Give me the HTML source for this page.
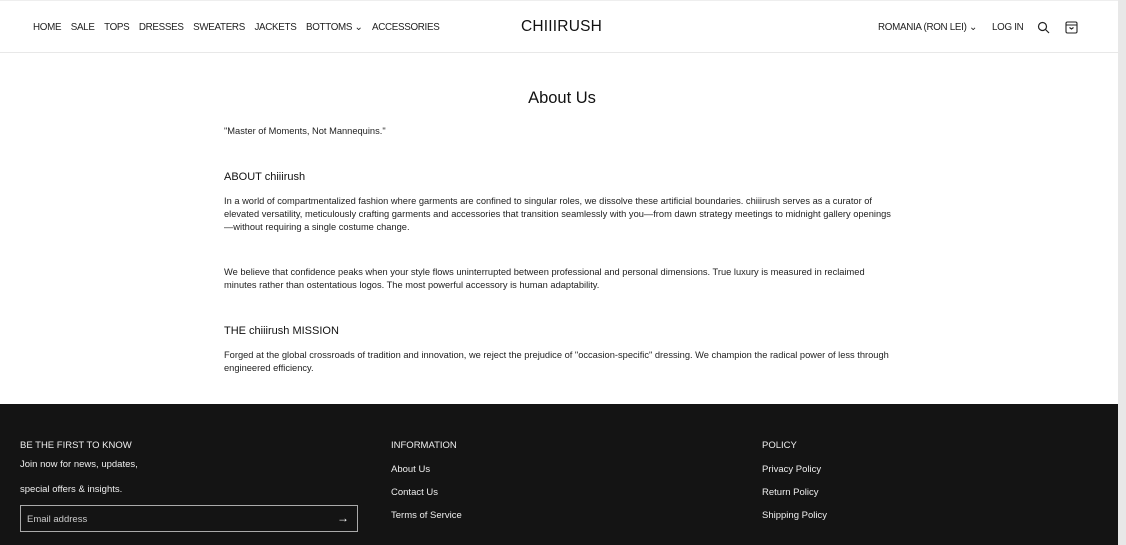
<!DOCTYPE html>
<html><head><meta charset="utf-8"><style>
*{margin:0;padding:0;box-sizing:border-box}
body{width:1126px;height:545px;overflow:hidden;background:#fff;font-family:"Liberation Sans",sans-serif;color:#111;position:relative}
.hdr{position:absolute;top:0;left:0;width:1118px;height:53px;border-top:1px solid #eee;border-bottom:1px solid #e8e8e8}
.nav{position:absolute;top:21px;font-size:9.8px;color:#222;white-space:nowrap;letter-spacing:-0.3px}
.nav span{margin-right:9.5px}
.logo{position:absolute;left:521px;top:17px;font-size:15.5px;letter-spacing:0.2px;color:#111}
.sb{position:absolute;right:0;top:0;width:8px;height:545px;background:#e8e8e8}
.main{position:absolute;left:224px;top:0;width:676px;font-size:9.3px;line-height:13px;color:#222}
h1{position:absolute;top:92px;left:0;width:676px;text-align:center;font-size:16.5px;font-weight:normal;color:#111}
h2{font-size:11px;font-weight:normal;color:#111;position:absolute;left:0}
p{position:absolute;left:0;width:672px}
.ft{position:absolute;left:0;top:404px;width:1118px;height:141px;background:#141414;color:#eee;font-size:9.5px}
.ft div{position:absolute;white-space:nowrap}
.em{left:20px;top:101px;width:338px;height:27px;border:1px solid #aaa;padding:8px 6px;color:#ccc}
</style></head><body>
<div class="hdr">
<div class="nav" style="left:33px"><span>HOME</span><span>SALE</span><span>TOPS</span><span>DRESSES</span><span>SWEATERS</span><span>JACKETS</span><span>BOTTOMS &#8964;</span><span>ACCESSORIES</span></div>
<div class="logo">CHIIIRUSH</div>
<div class="nav" style="left:878px">ROMANIA (RON LEI) &#8964;</div>
<div class="nav" style="left:992px">LOG IN</div>
<svg style="position:absolute;left:1037px;top:20px" width="13" height="13" viewBox="0 0 13 13" fill="none" stroke="#222" stroke-width="1.2"><circle cx="5.5" cy="5.5" r="4"/><path d="M8.5 8.5L12 12"/></svg>
<svg style="position:absolute;left:1065px;top:19px" width="13" height="14" viewBox="0 0 13 14" fill="none" stroke="#222" stroke-width="1.1"><rect x="1" y="2" width="11" height="11" rx="1.5"/><path d="M1 5h11M4.5 7.5l2 1.5 2-1.5"/></svg>
</div>
<div class="sb"></div>
<div class="main">
<h1>About Us</h1>
<p style="top:125px">"Master of Moments, Not Mannequins."</p>
<h2 style="top:171px">ABOUT chiiirush</h2>
<p style="top:195px">In a world of compartmentalized fashion where garments are confined to singular roles, we dissolve these artificial boundaries. chiiirush serves as a curator of elevated versatility, meticulously crafting garments and accessories that transition seamlessly with you—from dawn strategy meetings to midnight gallery openings—without requiring a single costume change.</p>
<p style="top:266px;width:650px">We believe that confidence peaks when your style flows uninterrupted between professional and personal dimensions. True luxury is measured in reclaimed minutes rather than ostentatious logos. The most powerful accessory is human adaptability.</p>
<h2 style="top:325px">THE chiiirush MISSION</h2>
<p style="top:349px">Forged at the global crossroads of tradition and innovation, we reject the prejudice of "occasion-specific" dressing. We champion the radical power of less through engineered efficiency.</p>
</div>
<div class="ft">
<div style="left:20px;top:36px">BE THE FIRST TO KNOW</div>
<div style="left:20px;top:55px">Join now for news, updates,</div>
<div style="left:20px;top:80px">special offers &amp; insights.</div>
<div class="em">Email address<span style="position:absolute;right:8px;top:5px;font-size:12px;color:#fff">&#8594;</span></div>
<div style="left:391px;top:36px">INFORMATION</div>
<div style="left:391px;top:60px">About Us</div>
<div style="left:391px;top:83px">Contact Us</div>
<div style="left:391px;top:106px">Terms of Service</div>
<div style="left:762px;top:36px">POLICY</div>
<div style="left:762px;top:60px">Privacy Policy</div>
<div style="left:762px;top:83px">Return Policy</div>
<div style="left:762px;top:106px">Shipping Policy</div>
</div>
</body></html>
